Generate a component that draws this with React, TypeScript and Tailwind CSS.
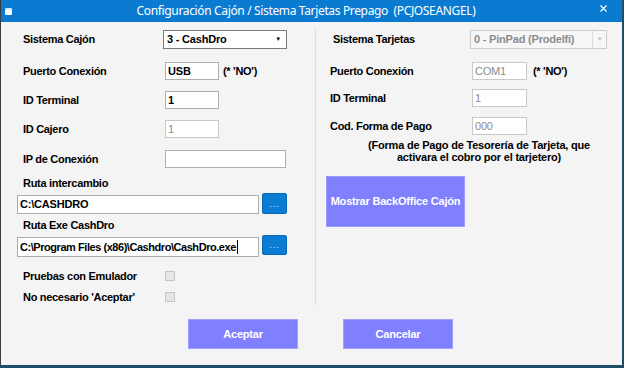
import React from 'react';

const font = { fontFamily: '"Liberation Sans", Arial, sans-serif' };

const Label: React.FC<{ children: React.ReactNode; w: string }> = ({ children, w }) => (
  <div className={`${w} shrink-0 text-[11px] font-bold text-black leading-none whitespace-nowrap tracking-[-0.3px]`}>
    {children}
  </div>
);

const Input: React.FC<{ value?: string; w: string; disabled?: boolean; bold?: boolean; cls?: string }> = ({
  value = '',
  w,
  disabled,
  bold = true,
  cls = 'h-full',
}) => (
  <div
    className={`${w} ${cls} shrink-0 flex items-center px-[2px] bg-white border text-[11px] leading-none whitespace-nowrap tracking-[-0.2px] ${
      disabled ? 'border-[#c9c9c9] text-[#8c8c8c]' : 'border-[#adadad] text-black'
    } ${bold ? 'font-bold' : ''}`}
  >
    {value}
  </div>
);

const DotsButton: React.FC<{ cls: string }> = ({ cls }) => (
  <div
    className={`w-[25px] h-[20px] ml-[3px] shrink-0 rounded-[2px] bg-[#0a7cd4] border border-[#0869b8] flex items-end justify-center pb-[4px] ${cls}`}
  >
    <span className="text-[#cfe6fb] text-[9px] leading-none tracking-[1px]">...</span>
  </div>
);

const Check = () => <div className="w-[10px] h-[10px] bg-[#e6e6e6] border border-[#c4c4c4]" />;

export default function App() {
  return (
    <div className="w-[624px] h-[368px] bg-[#1f4f68] overflow-hidden" style={font}>
      <div className="w-[622px] h-[365px] bg-[#f4f4f4] border-l border-[#3a3a3a] flex flex-col">
        {/* Title bar */}
        <div className="h-[22px] bg-[#0b7bd2] flex items-center shrink-0">
          <div className="ml-[4px] w-[7px] h-[7px] bg-white rounded-[1px] border-t-2 border-[#d8e9f8]" />
          <div
            className="flex-1 text-center text-white text-[12px] leading-none tracking-[-0.35px]"
            style={{ fontFamily: '"Noto Sans", "Open Sans", sans-serif' }}
          >
            Configuración Cajón / Sistema Tarjetas Prepago&nbsp;&nbsp;(PCJOSEANGEL)
          </div>
          <svg width="7" height="7" viewBox="0 0 7 7" className="mr-[15px] -mt-[6px]">
            <path d="M0.5 0.5 L6.5 6.5 M6.5 0.5 L0.5 6.5" stroke="white" strokeWidth="1.2" />
          </svg>
        </div>

        <div className="flex">
          {/* Left column */}
          <div className="w-[314px] shrink-0 flex flex-col pt-[8px]">
            <div className="h-[19px] flex items-center pl-[22px]">
              <Label w="w-[140px]">Sistema Cajón</Label>
              <div className="w-[124px] h-full flex items-center justify-between px-[3px] bg-white border border-[#7a7a7a] text-[11px] font-bold tracking-[-0.2px]">
                <span>3 - CashDro</span>
                <span className="text-[6px] mr-[2px]">▼</span>
              </div>
            </div>
            <div className="h-[18px] mt-[13px] flex items-center pl-[22px]">
              <Label w="w-[142px]">Puerto Conexión</Label>
              <Input value="USB" w="w-[54px]" />
              <span className="ml-[4px] text-[11px] font-bold tracking-[-0.3px]">(* 'NO')</span>
            </div>
            <div className="h-[18px] mt-[11px] flex items-center pl-[22px]">
              <Label w="w-[142px]">ID Terminal</Label>
              <Input value="1" w="w-[54px]" />
            </div>
            <div className="h-[18px] mt-[11px] flex items-center pl-[22px]">
              <Label w="w-[142px]">ID Cajero</Label>
              <Input value="1" w="w-[54px]" disabled bold={false} />
            </div>
            <div className="h-[18px] mt-[12px] flex items-center pl-[22px]">
              <Label w="w-[142px]">IP de Conexión</Label>
              <Input w="w-[121px]" />
            </div>
            <div className="h-[14px] mt-[8px] flex items-center pl-[22px]">
              <Label w="w-[200px]">Ruta intercambio</Label>
            </div>
            <div className="h-[21px] mt-[3px] flex pl-[16px]">
              <Input value="C:\CASHDRO" w="w-[242px]" cls="h-[19px] self-end" />
              <DotsButton cls="h-[21px]" />
            </div>
            <div className="h-[14px] mt-[4px] flex items-center pl-[22px]">
              <Label w="w-[200px]">Ruta Exe CashDro</Label>
            </div>
            <div className="h-[22px] mt-[3px] flex pl-[16px]">
              <div className="w-[242px] h-[20px] shrink-0 self-end flex items-center px-[2px] bg-white border border-[#adadad] text-[11px] font-bold leading-none whitespace-nowrap tracking-[-0.45px] overflow-hidden">
                C:\Program Files (x86)\Cashdro\CashDro.exe
                <span className="w-px h-[14px] bg-black ml-px shrink-0" />
              </div>
              <DotsButton cls="self-start" />
            </div>
            <div className="h-[14px] mt-[12px] flex items-center pl-[22px]">
              <Label w="w-[142px]">Pruebas con Emulador</Label>
              <Check />
            </div>
            <div className="h-[14px] mt-[7px] flex items-center pl-[22px]">
              <Label w="w-[142px]">No necesario 'Aceptar'</Label>
              <Check />
            </div>
          </div>

          {/* Divider */}
          <div className="w-px shrink-0 mt-[6px] h-[277px] bg-[#dedede]" />

          {/* Right column */}
          <div className="flex-1 min-w-0 flex flex-col pt-[8px]">
            <div className="h-[19px] flex items-center pl-[17px]">
              <Label w="w-[137px]">Sistema Tarjetas</Label>
              <div className="w-[137px] h-full shrink-0 flex items-center justify-between pl-[3px] bg-[#f7f7f7] border border-[#cccccc] text-[11px] font-bold text-[#8c8c8c] whitespace-nowrap tracking-[-0.2px]">
                <span>0 - PinPad (Prodelfi)</span>
                <span className="w-[14px] h-full border-l border-[#dcdcdc] flex items-center justify-center text-[6px] text-[#bdbdbd]">
                  ▼
                </span>
              </div>
            </div>
            <div className="h-[18px] mt-[13px] flex items-center pl-[14px]">
              <Label w="w-[142px]">Puerto Conexión</Label>
              <Input value="COM1" w="w-[55px]" disabled bold={false} />
              <span className="ml-[6px] text-[11px] font-bold tracking-[-0.3px]">(* 'NO')</span>
            </div>
            <div className="h-[18px] mt-[9px] flex items-center pl-[14px]">
              <Label w="w-[142px]">ID Terminal</Label>
              <Input value="1" w="w-[55px]" disabled bold={false} />
            </div>
            <div className="h-[18px] mt-[10px] flex items-center pl-[14px]">
              <Label w="w-[142px]">Cod. Forma de Pago</Label>
              <Input value="000" w="w-[55px]" disabled bold={false} />
            </div>
            <div className="mt-[4px] pl-[20px] text-center text-[11px] font-bold leading-[12px] tracking-[-0.2px] whitespace-nowrap">
              (Forma de Pago de Tesorería de Tarjeta, que
              <br />
              activara el cobro por el tarjetero)
            </div>
            <div className="mt-[13px] ml-[10px] w-[139px] h-[51px] bg-[#8080ff] border border-[#9a9aff] flex items-center justify-center text-white text-[11px] font-bold whitespace-nowrap tracking-[-0.2px]">
              Mostrar BackOffice Cajón
            </div>
          </div>
        </div>

        {/* Bottom buttons */}
        <div className="flex mt-[14px] pl-[187px] gap-[45px]">
          <div className="w-[110px] h-[30px] bg-[#8080ff] border border-[#a0a0ff] flex items-center justify-center text-white text-[11px] font-bold tracking-[-0.2px]">
            Aceptar
          </div>
          <div className="w-[110px] h-[30px] bg-[#8080ff] border border-[#a0a0ff] flex items-center justify-center text-white text-[11px] font-bold tracking-[-0.2px]">
            Cancelar
          </div>
        </div>
      </div>
    </div>
  );
}
